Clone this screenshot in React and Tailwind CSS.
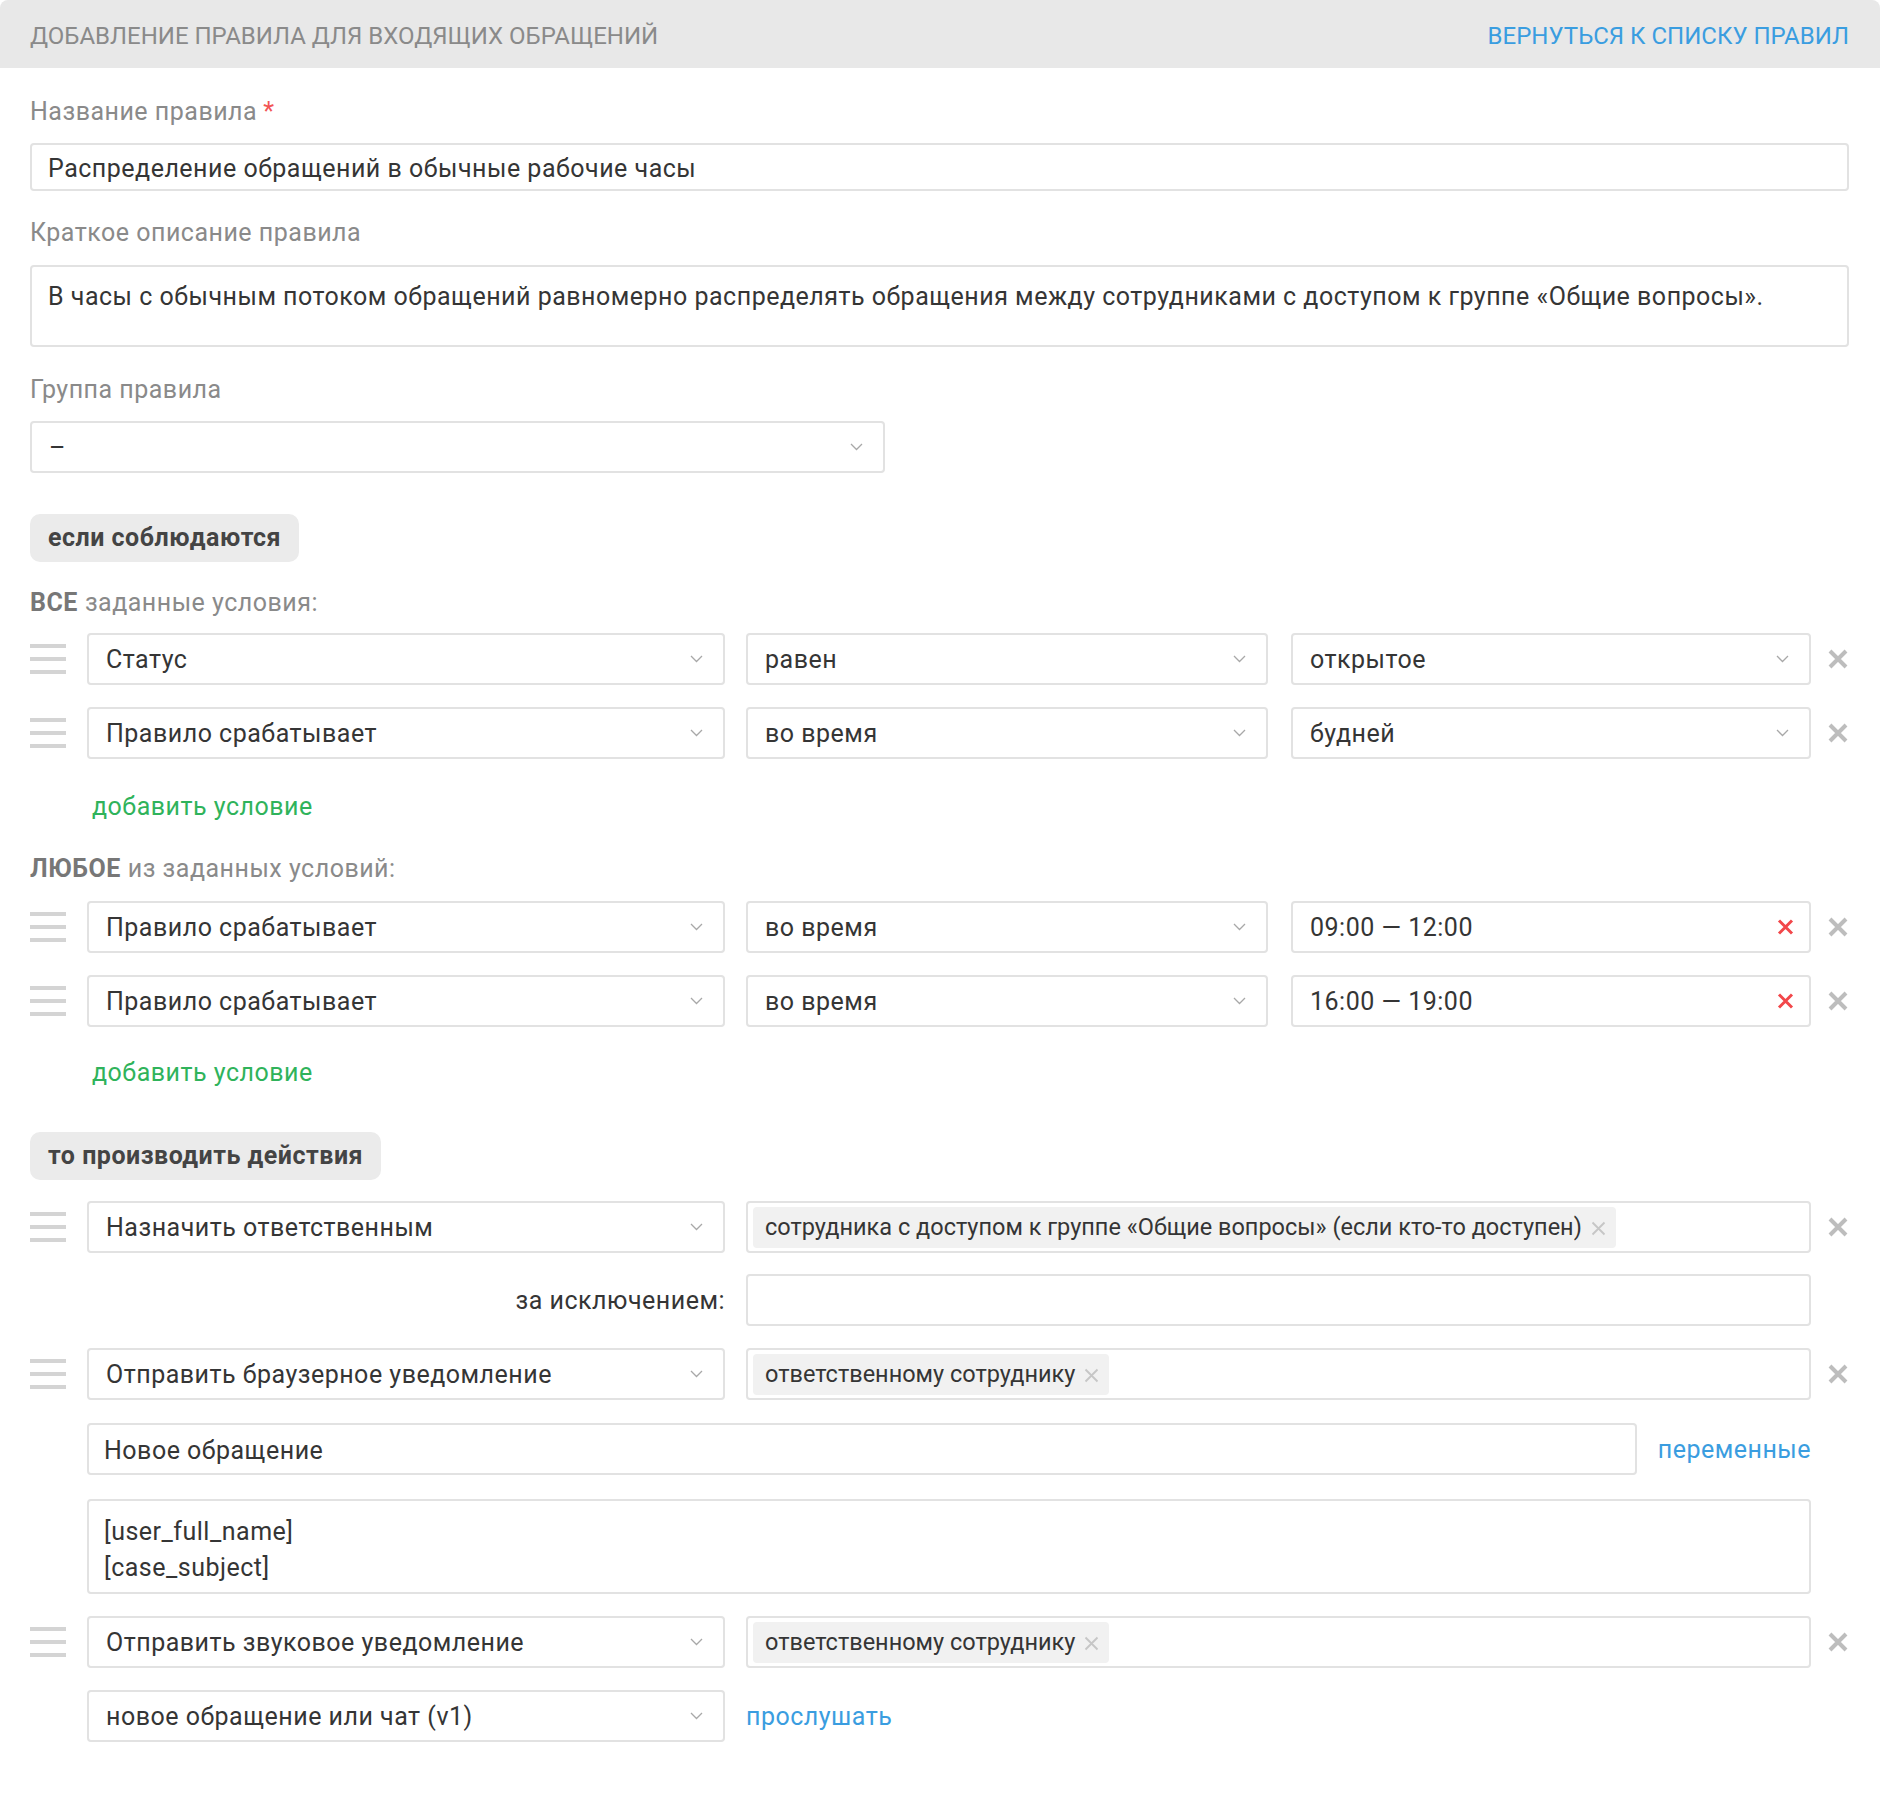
import React from "react";

const Chevron = () => (
  <svg width="13" height="8" viewBox="0 0 13 8" fill="none" className="shrink-0">
    <path d="M1 1l5.5 5.5L12 1" stroke="#a8a8a8" strokeWidth="1.3" />
  </svg>
);

const GrayX = () => (
  <svg width="22" height="20" viewBox="0 0 22 20" fill="none">
    <path d="M3 2l16 16M19 2L3 18" stroke="#bdbdbd" strokeWidth="4" />
  </svg>
);

const RedX = () => (
  <svg width="17" height="16" viewBox="0 0 17 16" fill="none">
    <path d="M2 1.5l13 13M15 1.5l-13 13" stroke="#f2474a" strokeWidth="3" />
  </svg>
);

const ChipX = () => (
  <svg width="15" height="15" viewBox="0 0 15 15" fill="none">
    <path d="M1.5 1.5l12 12M13.5 1.5l-12 12" stroke="#c6c6c6" strokeWidth="1.8" />
  </svg>
);

const Handle = () => (
  <div className="flex flex-col gap-[9px] w-[36px]">
    <div className="h-[4px] bg-[#d4d4d4]" />
    <div className="h-[4px] bg-[#d4d4d4]" />
    <div className="h-[4px] bg-[#d4d4d4]" />
  </div>
);

const Select = ({ value, className = "" }) => (
  <div
    className={`h-[52px] border-2 border-[#e2e2e2] rounded-[4px] bg-white flex items-center justify-between pl-[17px] pr-[20px] text-[#353535] ${className}`}
  >
    <span className="pt-[2px]">{value}</span>
    <Chevron />
  </div>
);

const TimeInput = ({ value }) => (
  <div className="h-[52px] w-[520px] ml-[23px] border-2 border-[#e2e2e2] rounded-[4px] flex items-center justify-between pl-[17px] pr-[15px] text-[#353535]">
    <span className="pt-[2px]">{value}</span>
    <RedX />
  </div>
);

const Chip = ({ text }) => (
  <div className="h-[41px] bg-[#f1f1f1] rounded-[4px] flex items-center gap-[9px] pl-[12px] pr-[10px] pt-[2px] text-[23.5px] tracking-normal text-[#353535]">
    <span>{text}</span>
    <ChipX />
  </div>
);

const Row = ({ children, handle = true, removable = true, className = "" }) => (
  <div className={`flex items-center ${className}`}>
    <div className="w-[57px] shrink-0">{handle && <Handle />}</div>
    <div className="w-[1724px] shrink-0 flex items-center">{children}</div>
    <div className="flex-1 flex justify-end">{removable && <GrayX />}</div>
  </div>
);

const Label = ({ children, className = "" }) => (
  <div className={`h-[30px] flex items-center text-[#8a8a8a] ${className}`}>{children}</div>
);

const Pill = ({ children, className = "" }) => (
  <div className={`self-start h-[48px] px-[18px] flex items-center bg-[#ebebeb] rounded-[10px] font-bold text-[#444] ${className}`}>
    {children}
  </div>
);

export default function App() {
  return (
    <div className="w-[1880px] min-h-[1816px] bg-white font-['Roboto',sans-serif] text-[25px] tracking-[0.5px]">
      {/* HEADER */}
      <div className="h-[68px] bg-[#e8e8e8] rounded-t-[8px] flex items-center justify-between pl-[30px] pr-[31px] pt-[3px] text-[24px] tracking-normal">
        <span className="text-[#8a8a8a] uppercase">Добавление правила для входящих обращений</span>
        <span className="text-[#3a9de0] uppercase">Вернуться к списку правил</span>
      </div>

      {/* FORM */}
      <div className="flex flex-col pl-[30px] pr-[31px]">
        <Label className="mt-[29px]">
          Название правила<span className="text-[#f25555] ml-[6px]">*</span>
        </Label>
        <div className="mt-[16px] h-[48px] border-2 border-[#e2e2e2] rounded-[4px] flex items-center pl-[16px] pt-[3px] text-[#353535]">
          Распределение обращений в обычные рабочие часы
        </div>

        <Label className="mt-[27px]">Краткое описание правила</Label>
        <div className="mt-[17px] h-[82px] border-2 border-[#e2e2e2] rounded-[4px] pl-[16px] pt-[15px] leading-[30px] text-[#353535]">
          В часы с обычным потоком обращений равномерно распределять обращения между сотрудниками с доступом к группе «Общие вопросы».
        </div>

        <Label className="mt-[28px]">Группа правила</Label>
        <Select value="–" className="mt-[16px] w-[855px] pr-[20px]" />

        <Pill className="mt-[41px]">если соблюдаются</Pill>

        <Label className="mt-[26px]">
          <span className="font-bold text-[#777] mr-[7px]">ВСЕ</span>заданные условия:
        </Label>
        <Row className="mt-[15px]">
          <Select value="Статус" className="w-[638px]" />
          <Select value="равен" className="w-[522px] ml-[21px]" />
          <Select value="открытое" className="w-[520px] ml-[23px]" />
        </Row>
        <Row className="mt-[22px]">
          <Select value="Правило срабатывает" className="w-[638px]" />
          <Select value="во время" className="w-[522px] ml-[21px]" />
          <Select value="будней" className="w-[520px] ml-[23px]" />
        </Row>
        <div className="mt-[33px] h-[30px] flex items-center pl-[62px] text-[#2fb35b]">добавить условие</div>

        <Label className="mt-[32px]">
          <span className="font-bold text-[#777] mr-[7px]">ЛЮБОЕ</span>из заданных условий:
        </Label>
        <Row className="mt-[17px]">
          <Select value="Правило срабатывает" className="w-[638px]" />
          <Select value="во время" className="w-[522px] ml-[21px]" />
          <TimeInput value="09:00 — 12:00" />
        </Row>
        <Row className="mt-[22px]">
          <Select value="Правило срабатывает" className="w-[638px]" />
          <Select value="во время" className="w-[522px] ml-[21px]" />
          <TimeInput value="16:00 — 19:00" />
        </Row>
        <div className="mt-[31px] h-[30px] flex items-center pl-[62px] text-[#2fb35b]">добавить условие</div>

        <Pill className="mt-[44px]">то производить действия</Pill>

        <Row className="mt-[21px]">
          <Select value="Назначить ответственным" className="w-[638px]" />
          <div className="w-[1065px] ml-[21px] h-[52px] border-2 border-[#e2e2e2] rounded-[4px] flex items-center pl-[5px]">
            <Chip text="сотрудника с доступом к группе «Общие вопросы» (если кто-то доступен)" />
          </div>
        </Row>
        <Row className="mt-[21px]" handle={false} removable={false}>
          <div className="w-[638px] text-right pt-[2px] text-[#353535]">за исключением:</div>
          <div className="w-[1065px] ml-[21px] h-[52px] border-2 border-[#e2e2e2] rounded-[4px]" />
        </Row>
        <Row className="mt-[22px]">
          <Select value="Отправить браузерное уведомление" className="w-[638px]" />
          <div className="w-[1065px] ml-[21px] h-[52px] border-2 border-[#e2e2e2] rounded-[4px] flex items-center pl-[5px]">
            <Chip text="ответственному сотруднику" />
          </div>
        </Row>
        <Row className="mt-[23px]" handle={false} removable={false}>
          <div className="w-[1550px] h-[52px] border-2 border-[#e2e2e2] rounded-[4px] flex items-center pl-[15px] pt-[3px] text-[#353535]">
            Новое обращение
          </div>
          <div className="flex-1 text-right pt-[2px] text-[#3a9de0]">переменные</div>
        </Row>
        <Row className="mt-[24px]" handle={false} removable={false}>
          <div className="w-full h-[95px] border-2 border-[#e2e2e2] rounded-[4px] pl-[15px] pt-[13px] leading-[36px] text-[#353535]">
            <div>[user_full_name]</div>
            <div>[case_subject]</div>
          </div>
        </Row>
        <Row className="mt-[22px]">
          <Select value="Отправить звуковое уведомление" className="w-[638px]" />
          <div className="w-[1065px] ml-[21px] h-[52px] border-2 border-[#e2e2e2] rounded-[4px] flex items-center pl-[5px]">
            <Chip text="ответственному сотруднику" />
          </div>
        </Row>
        <Row className="mt-[22px]" handle={false} removable={false}>
          <Select value="новое обращение или чат (v1)" className="w-[638px]" />
          <div className="ml-[21px] pt-[2px] text-[#3a9de0]">прослушать</div>
        </Row>
      </div>
    </div>
  );
}
